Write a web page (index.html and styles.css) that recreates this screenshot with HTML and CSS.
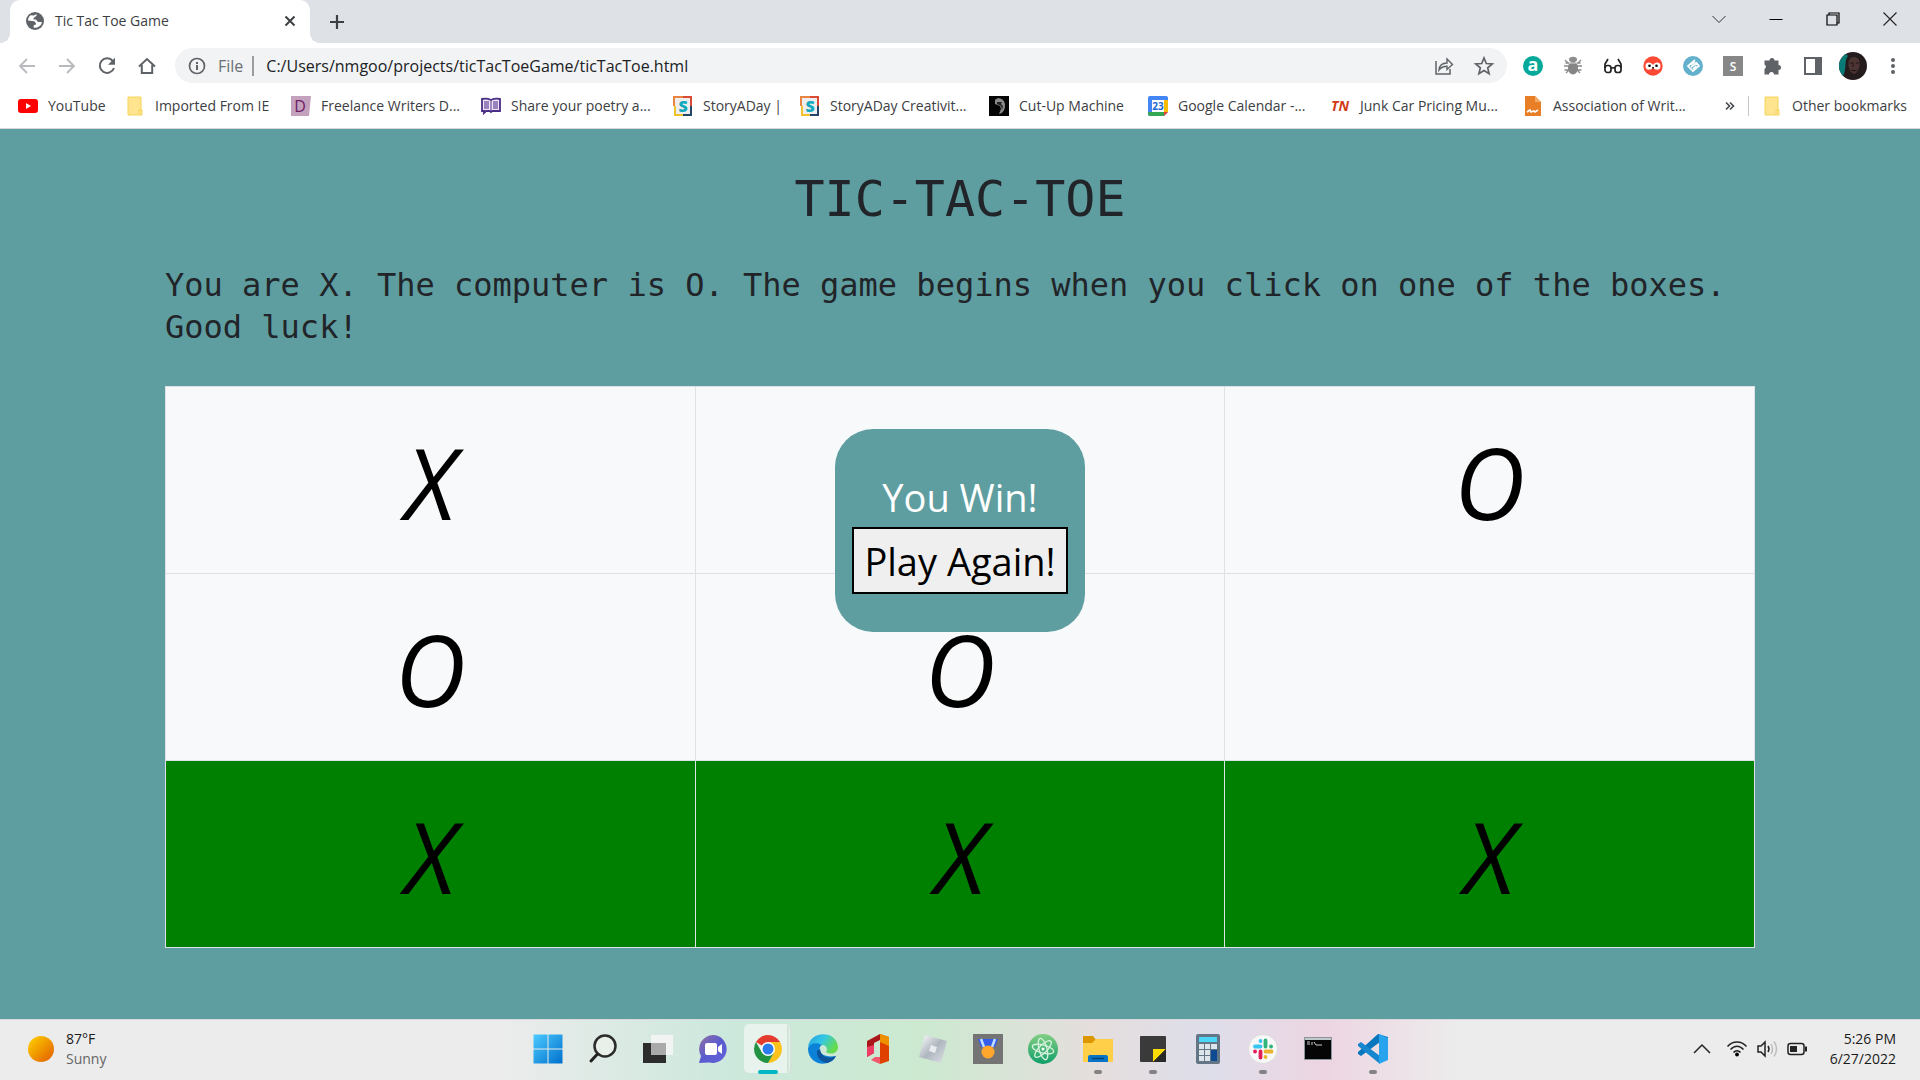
FILE: index.html
```
<!DOCTYPE html>
<html lang="en">
<head>
<meta charset="utf-8">
<title>Tic Tac Toe Game</title>
<link rel="stylesheet" href="styles.css">
</head>
<body>
<header class="browser">
  <div class="tabstrip">
    <div class="tab">
      <svg class="tab-icon" width="18" height="18" viewBox="0 0 18 18"><circle cx="9" cy="9" r="9" fill="#5f6368"/><path d="M2 8.5c0-2 1-4 2.600-5.200L8 3.500l2-1.300c1 .2.800 1.300.2 1.800L8.500 5.300 7 7.200l2.500.3c1.500.2 1.500 2.300 2.800 2.400h3.600c-.3 2-1.300 3.500-2.900 4.700-1.800 1.300-4 1.500-5.400 1l.2-2.600c1.600 0 2.700-1 2.100-1.800L8.300 9.300z" fill="#fff"/></svg>
      <span class="tab-title">Tic Tac Toe Game</span>
      <button class="icon-button" aria-label="Close tab"><svg width="12" height="12" viewBox="0 0 12 12"><path d="M1.500 1.500l9 9m0-9l-9 9" stroke="#3c4043" stroke-width="2"/></svg></button>
    </div>
    <button class="icon-button new-tab" aria-label="New tab"><svg width="16" height="16" viewBox="0 0 16 16"><path d="M8 1v14M1 8h14" stroke="#3c4043" stroke-width="2.200"/></svg></button>
    <div class="window-controls">
      <button class="icon-button" aria-label="Search tabs"><svg width="14" height="14" viewBox="0 0 14 14"><path d="M.5 4L7 10.500 13.500 4" fill="none" stroke="#333"/></svg></button>
      <button class="icon-button" aria-label="Minimize"><svg width="14" height="14" viewBox="0 0 14 14"><path d="M.5 7.500h13" stroke="#000"/></svg></button>
      <button class="icon-button" aria-label="Restore"><svg width="14" height="14" viewBox="0 0 14 14"><path d="M1 3h10v10H1zM3 3V1h10v10h-2" fill="none" stroke="#000" stroke-width="1.200"/></svg></button>
      <button class="icon-button" aria-label="Close window"><svg width="14" height="14" viewBox="0 0 14 14"><path d="M.5.5l13 13m0-13l-13 13" stroke="#222" stroke-width="1.100"/></svg></button>
    </div>
  </div>

  <div class="toolbar">
    <div class="nav-buttons">
      <button class="icon-button" aria-label="Back"><svg width="18" height="18" viewBox="0 0 18 18"><path d="M17 9H2m7-7L2 9l7 7" fill="none" stroke="#b8babd" stroke-width="1.800"/></svg></button>
      <button class="icon-button" aria-label="Forward"><svg width="18" height="18" viewBox="0 0 18 18"><path d="M1 9h15M9 2l7 7-7 7" fill="none" stroke="#b8babd" stroke-width="1.800"/></svg></button>
      <button class="icon-button" aria-label="Reload"><svg width="18" height="18" viewBox="0 0 18 18"><path d="M14.800 4A7.300 7.300 0 1 0 16 11" fill="none" stroke="#5f6368" stroke-width="2"/><path d="M17 .8v7h-7z" fill="#5f6368"/></svg></button>
      <button class="icon-button" aria-label="Home"><svg width="18" height="18" viewBox="0 0 18 18"><path d="M1 9.500L9 2l8 7.500M3.800 8v8h10.400V8" fill="none" stroke="#5f6368" stroke-width="2"/></svg></button>
    </div>
    <div class="omnibox">
      <svg width="18" height="18" viewBox="0 0 18 18"><circle cx="9" cy="9" r="7.500" fill="none" stroke="#5f6368" stroke-width="1.700"/><path d="M9 8v5M9 5v2" stroke="#5f6368" stroke-width="2"/></svg>
      <label class="scheme" for="address">File</label>
      <input class="address" id="address" type="text" value="C:/Users/nmgoo/projects/ticTacToeGame/ticTacToe.html">
      <button class="icon-button" aria-label="Share"><svg width="20" height="20" viewBox="0 0 20 20"><path d="M2 5v13h14v-5" fill="none" stroke="#5f6368" stroke-width="1.500"/><path d="M5 14c.5-5 3-7 8-7V3l5.500 5.500L13 13.500v-3.300c-3.500 0-6 1-8 3.800z" fill="none" stroke="#5f6368" stroke-width="1.400"/></svg></button>
      <button class="icon-button" aria-label="Bookmark this page"><svg width="20" height="20" viewBox="0 0 20 20"><path d="M10 2l2.300 5.500 6 .5-4.600 3.900 1.400 5.800L10 14.600l-5.100 3.100 1.400-5.800L1.700 8l6-.5z" fill="none" stroke="#5f6368" stroke-width="1.700"/></svg></button>
    </div>
    <div class="extensions">
      <button class="icon-button" aria-label="Shopping assistant"><svg width="20" height="20" viewBox="0 0 20 20"><circle cx="10" cy="10" r="10" fill="#05a99a"/><text x="10" y="15" class="glyph glyph-a">a</text></svg></button>
      <button class="icon-button" aria-label="Bug extension"><svg width="20" height="20" viewBox="0 0 20 20"><path d="M2 4l4 4m12-4l-4 4M1 10h5m8 0h5M3 17l4-4m10 4l-4-4M2.500 7h4M13.500 7h4M1.500 14h5m7 0h5" stroke="#8b8b8b" stroke-width="1.300"/><ellipse cx="10" cy="3.500" rx="4" ry="2.700" fill="#8e8e8e"/><ellipse cx="10" cy="12" rx="5" ry="6.500" fill="#858585"/><path d="M5.500 7h9" stroke="#ddd"/></svg></button>
      <button class="icon-button" aria-label="Reader extension"><svg width="20" height="20" viewBox="0 0 20 20"><g fill="none" stroke="#222" stroke-width="1.700"><rect x="2" y="9.500" width="6" height="7" rx="2.500"/><rect x="12" y="9.500" width="6" height="7" rx="2.500"/><path d="M2 12V8l3-5M18 12V8l-3-5M8 12.500c1-1 3-1 4 0"/></g></svg></button>
      <button class="icon-button" aria-label="Owl extension"><svg width="20" height="20" viewBox="0 0 20 20"><circle cx="10" cy="10" r="9.700" fill="#fb4934"/><path d="M2.500 10c0-4.500 5.500-4.500 7.500-1 2-3.500 7.500-3.500 7.500 1 0 5-5.500 4.500-7.500 1.500-2 3-7.500 3.500-7.500-1.500z" fill="#fff"/><circle cx="6.500" cy="9.800" r="1.300"/><circle cx="13.500" cy="9.800" r="1.300"/><path d="M9 11l1 2.500 1-2.500z"/></svg></button>
      <button class="icon-button" aria-label="Link extension"><svg width="20" height="20" viewBox="0 0 20 20"><circle cx="10" cy="10" r="10" fill="#62b0cc"/><path d="M12 4L5 10l5 5 6-5-2.500-3L8 11m0-2.500l4-3M10 13l3.500-3" fill="none" stroke="#fff" stroke-width="1.700"/></svg></button>
      <button class="icon-button" aria-label="S extension"><svg width="20" height="20" viewBox="0 0 20 20"><path d="M0 0h20v20H0z" fill="#878787"/><text x="10" y="14.500" class="glyph glyph-s">S</text></svg></button>
      <button class="icon-button" aria-label="Extensions"><svg width="20" height="20" viewBox="0 0 20 20"><path d="M1.500 4.500h5a2.500 2.500 0 1 1 5 0h4V9a2.500 2.500 0 1 1 0 5v4.500H11a2.500 2.500 0 0 0-5 0H1.500V13a2.500 2.500 0 0 0 0-4.500z" fill="#5f6368"/></svg></button>
      <button class="icon-button" aria-label="Side panel"><svg width="20" height="20" viewBox="0 0 20 20"><path d="M2 2h16v16H2z" fill="none" stroke="#5f6368" stroke-width="2"/><path d="M12 2h6v16h-6z" fill="#5f6368"/></svg></button>
      <button class="icon-button" aria-label="Profile"><svg width="28" height="28" viewBox="0 0 28 28"><circle cx="14" cy="14" r="14" fill="#241b1c"/><path d="M7 2A14 14 0 0 0 4 24C8 17 5 8 9 4z" fill="#087b76"/><path d="M10 8c2-4 8-4 10 0 2 6-1 13-5 14-4-1-7-8-5-14z" fill="#4b3431"/><path d="M11 11h3m3 0h3m-6 0v4m-2 3c2 1 4 1 6 0" stroke="#211516"/></svg></button>
      <button class="icon-button" aria-label="Menu"><svg width="20" height="20" viewBox="0 0 20 20" fill="#5f6368"><circle cx="10" cy="4" r="2"/><circle cx="10" cy="10" r="2"/><circle cx="10" cy="16" r="2"/></svg></button>
    </div>
  </div>

  <nav class="bookmarks" aria-label="Bookmarks">
    <div class="bookmark-list">
      <a class="bookmark" href="#"><svg width="20" height="20" viewBox="0 0 20 20"><rect y="3" width="20" height="14" rx="3" fill="red"/><path d="M8 7l5 3-5 3z" fill="#fff"/></svg>YouTube</a>
      <a class="bookmark" href="#"><svg width="20" height="20" viewBox="0 0 20 20"><path d="M3 1h13v13h1v5H3z" fill="#ffe48f" stroke="#f6d25b"/><path d="M14 18v-4h3" fill="none" stroke="#f6d25b"/></svg>Imported From IE</a>
      <a class="bookmark" href="#"><svg width="20" height="20" viewBox="0 0 20 20"><path d="M0 0h20l-2 20H0z" fill="#c4a2bd"/><text x="9" y="16" class="glyph glyph-d">D</text></svg>Freelance Writers D...</a>
      <a class="bookmark" href="#"><svg width="20" height="20" viewBox="0 0 20 20"><path d="M1 3q5-1 9 1 4-2 9-1v12h-8l-1 1-1-1H5l-2 2v-2H1z" fill="#ede8f6" stroke="#4b2c86" stroke-width="1.800"/><path d="M10 4v11M3 6h5M3 8h5M3 10h5M3 12h5M12 6h5M12 8h5M12 10h5M12 12h5" stroke="#8060ad" stroke-width="1.400"/></svg>Share your poetry a...</a>
      <a class="bookmark" href="#"><svg width="20" height="20" viewBox="0 0 20 20"><path d="M1 0h18v20H1z" fill="#eee"/><path d="M1 10V1h9" fill="none" stroke="#e98540" stroke-width="2"/><path d="M10 1h8v9" fill="none" stroke="#d94b35" stroke-width="2"/><path d="M18 10v9h-8" fill="none" stroke="#244568" stroke-width="2"/><path d="M10 19H2v-9" fill="none" stroke="#f0c22d" stroke-width="2"/><text x="10" y="16" class="glyph glyph-story">S</text></svg>StoryADay |</a>
      <a class="bookmark" href="#"><svg width="20" height="20" viewBox="0 0 20 20"><path d="M1 0h18v20H1z" fill="#eee"/><path d="M1 10V1h9" fill="none" stroke="#e98540" stroke-width="2"/><path d="M10 1h8v9" fill="none" stroke="#d94b35" stroke-width="2"/><path d="M18 10v9h-8" fill="none" stroke="#244568" stroke-width="2"/><path d="M10 19H2v-9" fill="none" stroke="#f0c22d" stroke-width="2"/><text x="10" y="16" class="glyph glyph-story">S</text></svg>StoryADay Creativit...</a>
      <a class="bookmark" href="#"><svg width="20" height="20" viewBox="0 0 20 20"><path d="M0 0h20v20H0z" fill="#050505"/><path d="M6 4c3-4 10-1 10 5 0 5-2 8-6 9l2-5-1-3-5-2z" fill="#8a8a8a"/><path d="M8 6l5 0-1 2 2 2-1 4-1-4-4-2z" fill="#222"/></svg>Cut-Up Machine</a>
      <a class="bookmark" href="#"><svg width="20" height="20" viewBox="0 0 20 20"><path d="M0 2q0-2 2-2h16q2 0 2 2v14l-4 4H2q-2 0-2-2z" fill="#4285f4"/><path d="M16 4h4v12h-4z" fill="#fbbc04"/><path d="M0 16h16v4H2q-2 0-2-2z" fill="#34a853"/><path d="M16 16h4l-4 4z" fill="#ea4335"/><path d="M4 4h12v12H4z" fill="#fff"/><text x="10" y="14" class="glyph glyph-date">23</text></svg>Google Calendar -...</a>
      <a class="bookmark" href="#"><svg width="20" height="20" viewBox="0 0 20 20"><text x="10" y="15" class="glyph glyph-tn">TN</text></svg>Junk Car Pricing Mu...</a>
      <a class="bookmark" href="#"><svg width="20" height="20" viewBox="0 0 20 20"><path d="M2 0h10l6 6v14H2z" fill="#e87e26"/><path d="M12 0v6h6z" fill="#f3a967"/><path d="M4 16l3-2 1 2 3-1 1 1 3-2" fill="none" stroke="#fff" stroke-width="1.600"/></svg>Association of Writ...</a>
    </div>
    <button class="icon-button more" aria-label="More bookmarks"><svg width="10" height="10" viewBox="0 0 10 10"><path d="M1 1.500L4.500 5 1 8.500M5 1.500L8.500 5 5 8.500" fill="none" stroke="#44474b" stroke-width="1.600"/></svg></button>
    <a class="bookmark other" href="#"><svg width="20" height="20" viewBox="0 0 20 20"><path d="M3 1h13v13h1v5H3z" fill="#ffe48f" stroke="#f6d25b"/><path d="M14 18v-4h3" fill="none" stroke="#f6d25b"/></svg>Other bookmarks</a>
  </nav>
</header>

<main class="page">
  <h1 class="title">TIC-TAC-TOE</h1>
  <p class="intro">You are X. The computer is O. The game begins when you click on one of the boxes. Good luck!</p>
  <div class="board-area">
    <table class="board">
      <tbody>
        <tr><td>X</td><td></td><td>O</td></tr>
        <tr><td>O</td><td>O</td><td></td></tr>
        <tr class="winner"><td>X</td><td>X</td><td>X</td></tr>
      </tbody>
    </table>
    <div class="result" role="dialog" aria-labelledby="result-text">
      <p class="result-text" id="result-text">You Win!</p>
      <button class="play-again">Play Again!</button>
    </div>
  </div>
</main>

<footer class="taskbar">
  <div class="weather">
    <svg width="26" height="26" viewBox="0 0 26 26"><defs><linearGradient id="sun" x2="1" y2="1"><stop stop-color="#ffd500"/><stop offset="1" stop-color="#e25a00"/></linearGradient></defs><circle cx="13" cy="13" r="13" fill="url(#sun)"/></svg>
    <div><div>87°F</div><div class="condition">Sunny</div></div>
  </div>
  <div class="apps">
    <button class="app" aria-label="Start"><svg width="30" height="30" viewBox="0 0 30 30"><defs><linearGradient id="win" x2="1" y2="1"><stop stop-color="#4ccaff"/><stop offset="1" stop-color="#0070cc"/></linearGradient></defs><path d="M.5.5h14v14H.5zm15 0h14v14h-14zm-15 15h14v14H.5zm15 0h14v14h-14z" fill="url(#win)"/></svg></button>
    <button class="app" aria-label="Search"><svg width="30" height="30" viewBox="0 0 30 30"><circle cx="17" cy="12" r="10.500" fill="#e9efe9" stroke="#2b2b2b" stroke-width="2.500"/><path d="M9.500 20L3 27" stroke="#222" stroke-width="3" stroke-linecap="round"/></svg></button>
    <button class="app" aria-label="Task view"><svg width="30" height="30" viewBox="0 0 30 30"><path d="M0 9h23v20H0z" fill="#2d2d2d"/><path d="M8 1h22v20H8z" fill="#f4f4f4" opacity=".92"/><path d="M8 9h15v12H8z" fill="#aaa"/></svg></button>
    <button class="app" aria-label="Chat"><svg width="30" height="30" viewBox="0 0 30 30"><defs><linearGradient id="chat" x2="1" y2="1"><stop stop-color="#93709f"/><stop offset=".5" stop-color="#5b5bd0"/><stop offset="1" stop-color="#6264d8"/></linearGradient></defs><path d="M15 1a14 14 0 1 1-4 27.500L1 29l2-7A14 14 0 0 1 15 1z" fill="url(#chat)"/><rect x="7" y="9" width="12" height="12" rx="2" fill="#fff"/><path d="M20 13l4-3v10l-4-3z" fill="#fff"/></svg></button>
    <button class="app active" aria-label="Chrome"><svg width="28" height="28" viewBox="0 0 28 28"><path d="M14 14L1.900 7A14 14 0 0 1 26.100 7H14z" fill="#e33b2e"/><path d="M14 7h12.100A14 14 0 0 1 14 28l6-10.500z" fill="#fcc21c"/><path d="M1.900 7A14 14 0 0 0 14 28l6.100-10.500L14 14 8 17.500z" fill="#229342"/><circle cx="14" cy="14" r="7" fill="#fff"/><circle cx="14" cy="14" r="5.500" fill="#2a7cef"/></svg></button>
    <button class="app" aria-label="Edge"><svg width="30" height="30" viewBox="0 0 30 30"><defs><linearGradient id="edge" x2="1" y2=".5"><stop stop-color="#229cdf"/><stop offset=".5" stop-color="#34c7e5"/><stop offset="1" stop-color="#66dc4b"/></linearGradient></defs><path d="M0 13C2-4 29-4 30 13c0 7-8 8-12 5 2-2 1-7-4-7C7 10 2 11 0 13z" fill="url(#edge)"/><path d="M0 14c2-5 9-6 14-3-5 2-3 14 14 11-4 7-12 9-18 7C3 26 0 21 0 14z" fill="#0b82d8"/><path d="M9 17c-1 6 4 11 10 12 4-1 7-3 9-7-6 3-15 2-16-7z" fill="#0c549c"/></svg></button>
    <button class="app" aria-label="Office"><svg width="30" height="30" viewBox="0 0 30 30"><path d="M4 7l13-7v6l-6 3v10l-7 4z" fill="#aa171b"/><path d="M4 13l7-2v8l-7 4z" fill="#ef3c65"/><path d="M17 0l9 3v24l-9 3z" fill="#df4200"/><path d="M17 0l9 3v9l-9-4z" fill="#ee9100"/><path d="M8 26l4-3h5v7z" fill="#f3576c"/></svg></button>
    <button class="app" aria-label="Roblox"><svg width="30" height="30" viewBox="0 0 30 30"><defs><linearGradient id="rob" x2="1" y2="1"><stop stop-color="#fff"/><stop offset=".5" stop-color="#aeb6bf"/><stop offset="1" stop-color="#e1e4e8"/></linearGradient></defs><path d="M7 1l22 6-6 22-22-6z" fill="url(#rob)"/><path d="M13 11l6 2-2 6-6-2z" fill="#e8ecee"/></svg></button>
    <button class="app" aria-label="Medal"><svg width="30" height="30" viewBox="0 0 30 30"><path d="M0 0h30v30H0z" fill="#747474"/><path d="M5 5h20l-3 8H8z" fill="#345ced"/><path d="M8 5l3 8M22 5l-3 8" stroke="#c2dfff" stroke-width="2.500"/><circle cx="15" cy="18" r="6.500" fill="#ffa62c"/></svg></button>
    <button class="app" aria-label="Atom"><svg width="30" height="30" viewBox="0 0 30 30"><defs><linearGradient id="atom" x2="0" y2="1"><stop stop-color="#83cf83"/><stop offset="1" stop-color="#109e6a"/></linearGradient></defs><circle cx="15" cy="15" r="15" fill="url(#atom)"/><g fill="none" stroke="#d9f1df" stroke-width="1.300"><ellipse cx="15" cy="15" rx="11" ry="4" transform="rotate(15 15 15)"/><ellipse cx="15" cy="15" rx="11" ry="4" transform="rotate(75 15 15)"/><ellipse cx="15" cy="15" rx="11" ry="4" transform="rotate(135 15 15)"/></g><circle cx="15" cy="15" r="1.500" fill="#fff"/></svg></button>
    <button class="app running" aria-label="File Explorer"><svg width="30" height="30" viewBox="0 0 30 30"><path d="M0 2h10l3 4v6H0z" fill="#dc9600"/><path d="M13 5h17v23H0V9h9z" fill="#ffcf49"/><path d="M5 28v-5q0-2 2-2h16q2 0 2 2v5z" fill="#0874c8"/><path d="M9 24.500h12" stroke="#034477" stroke-width="1.500"/></svg></button>
    <button class="app running" aria-label="Sticky Notes"><svg width="30" height="30" viewBox="0 0 30 30"><rect x="2" y="2" width="26" height="26" rx="1" fill="#3a3a3a"/><path d="M15 15h13L15 28z" fill="#ffdc00"/><path d="M28 15v13H15z" fill="#292929"/></svg></button>
    <button class="app" aria-label="Calculator"><svg width="30" height="30" viewBox="0 0 30 30"><rect x="3" width="24" height="30" rx="2" fill="#647685"/><path d="M6 3h18v5H6z" fill="#4bd8f8"/><path d="M6 10h5v5H6zm6 0h5v5h-5zm6 0h6v5h-6zM6 16h5v5H6zm6 0h5v5h-5zM6 22h5v5H6zm6 0h5v5h-5z" fill="#dce5eb"/><path d="M18 16h6v11h-6z" fill="#0c4a92"/></svg></button>
    <button class="app running" aria-label="Slack"><svg width="30" height="30" viewBox="0 0 30 30"><circle cx="15" cy="15" r="14.500" fill="#f8f8f8" stroke="#ddd"/><g fill="none" stroke-width="3.800" stroke-linecap="round"><path d="M12.500 7v.1M7 12.500h5.500" stroke="#36c5f0"/><path d="M17.500 6.500v6M23 12.500h.1" stroke="#2eb67d"/><path d="M17.500 17.500h6M17.500 23v.1" stroke="#ecb22e"/><path d="M12.500 17.500v6M7 17.500h.1" stroke="#e01e5a"/></g></svg></button>
    <button class="app" aria-label="Command Prompt"><svg width="30" height="30" viewBox="0 0 30 30"><path d="M1.500 3.500h27v22h-27z" fill="#050505" stroke="#8b9499"/><path d="M2 4h26v2H2z" fill="#c0c8ce"/><path d="M4 8h3m-3 2h3m2-2v3m2-3l2 3h6" stroke="#ccc" fill="none"/></svg></button>
    <button class="app running" aria-label="Visual Studio Code"><svg width="30" height="30" viewBox="0 0 30 30"><path d="M22 8L3 22l-3-2v-2L20 0l10 3v5z" fill="#0876bd"/><path d="M0 10l3-2 19 14v8L0 12z" fill="#1687cf"/><path d="M21 0l9 4v22l-9 4z" fill="#28a3ed"/></svg></button>
  </div>
  <div class="tray">
    <svg class="show-hidden" width="18" height="10" viewBox="0 0 18 10"><path d="M1 9l8-8 8 8" fill="none" stroke="#222" stroke-width="1.500"/></svg>
    <svg width="20" height="18" viewBox="0 0 20 18"><g fill="none" stroke="#222" stroke-width="1.500"><path d="M.5 6.500c5-6 14-6 19 0M3.500 9.500c4-4.500 9-4.500 13 0M6.500 12.500c2-2.500 5-2.500 7 0"/></g><circle cx="10" cy="14.500" r="1.900"/></svg>
    <svg width="20" height="18" viewBox="0 0 20 18"><path d="M1 6h3l4-4v14l-4-4H1zM11 6q2 3 0 6" fill="none" stroke="#222" stroke-width="1.500"/><path d="M14 4q3 5 0 10M17 1.500q5 7.500 0 15" fill="none" stroke="#bbb" stroke-width="1.400"/></svg>
    <svg width="20" height="14" viewBox="0 0 20 14"><rect x="1" y="1.500" width="16" height="11" rx="2.500" fill="none" stroke="#222" stroke-width="1.500"/><path d="M3 4h7v6H3zM18 4.500h2v5h-2z" fill="#222"/></svg>
    <div class="clock"><div>5:26 PM</div><div>6/27/2022</div></div>
  </div>
</footer>
</body>
</html>
```
FILE: styles.css
```
* { box-sizing: border-box; }

body {
  margin: 0;
  min-height: 100vh;
  display: flex;
  flex-direction: column;
  font-family: "Segoe UI", "Open Sans", "Noto Sans", sans-serif;
  font-size: 14px;
  color: #3c4043;
}

svg {
  display: block;
  flex: none;
  overflow: visible;
}

button { font-family: inherit; }

.icon-button {
  display: flex;
  align-items: center;
  justify-content: center;
  padding: 0;
  border: 0;
  background: none;
}

/* Browser frame */
.browser {
  background: #fff;
  border-bottom: 1px solid #d5d8db;
}

.tabstrip {
  display: flex;
  height: 43px;
  padding: 0 2px 0 10px;
  background: #dee1e6;
}

.tab {
  position: relative;
  display: flex;
  align-items: center;
  gap: 11px;
  width: 300px;
  padding: 0 14px 2px 16px;
  border-radius: 10px 10px 0 0;
  background: #fff;
}

.tab::before,
.tab::after {
  content: "";
  position: absolute;
  bottom: 0;
  width: 10px;
  height: 10px;
}

.tab::before {
  left: -10px;
  background: radial-gradient(circle at 0 0, transparent 10px, #fff 10px);
}

.tab::after {
  right: -10px;
  background: radial-gradient(circle at 100% 0, transparent 10px, #fff 10px);
}

.tab-title { flex: 1; }

.new-tab {
  width: 34px;
  margin-left: 10px;
}

.window-controls {
  display: flex;
  height: 37px;
  margin-left: auto;
}

.window-controls .icon-button { width: 57px; }

.toolbar {
  display: flex;
  align-items: center;
  height: 45px;
  padding: 0 7px;
}

.nav-buttons, .extensions {
  display: flex;
  align-items: center;
}

.nav-buttons .icon-button, .extensions .icon-button {
  width: 40px;
  height: 34px;
}

.omnibox {
  flex: 1;
  display: flex;
  align-items: center;
  height: 35px;
  margin: 0 6px 0 8px;
  padding: 0 9px 0 13px;
  gap: 12px;
  border-radius: 18px;
  background: #f1f3f4;
  font-size: 16px;
}

.omnibox .icon-button { width: 28px; }

.scheme {
  padding-right: 9px;
  border-right: 2px solid #9a9da0;
  line-height: 20px;
  color: #6b6f73;
}

.address {
  flex: 1;
  min-width: 0;
  padding: 0;
  border: 0;
  background: none;
  font: inherit;
  color: #202124;
}

.bookmarks {
  display: flex;
  align-items: center;
  height: 40px;
  padding: 0 13px 5px 18px;
}

.bookmark-list {
  flex: 1;
  display: grid;
  grid-template-columns: 107px 166px 190px 192px 127px 189px 159px 182px 193px 1fr;
}

.bookmark {
  display: flex;
  align-items: center;
  gap: 10px;
  color: #3c4043;
  text-decoration: none;
  white-space: nowrap;
}

.more { margin-right: 13px; }

.other {
  padding-left: 13px;
  border-left: 1px solid #c4c7ca;
}

.glyph {
  text-anchor: middle;
  font-family: "Open Sans", sans-serif;
  font-weight: 700;
  fill: #fff;
}

.glyph-a { font-size: 18px; }
.glyph-s { font-size: 12px; font-weight: 600; }
.glyph-d { font-size: 16px; font-weight: 400; fill: #6d2064; }
.glyph-story { font-size: 16px; font-weight: 800; fill: #11a9bb; }
.glyph-date { font-size: 10px; fill: #1967d2; }
.glyph-tn { font-size: 14px; font-style: italic; fill: #d33a16; }

/* Game page */
.page {
  flex: 1;
  padding: 40px 24px 70px;
  background: #5f9ea0;
  color: #212529;
}

.title {
  margin: 0 0 35px;
  font: 400 50px/60px "Comic Sans MS", "DejaVu Sans Mono", sans-serif;
  text-align: center;
}

.intro {
  max-width: 1590px;
  margin: 0 auto 38px;
  font: 32px/42px Consolas, "DejaVu Sans Mono", monospace;
}

.board-area {
  position: relative;
  max-width: 1590px;
  margin: 0 auto;
}

.board {
  width: 100%;
  table-layout: fixed;
  border-collapse: collapse;
  background: #f8f9fa;
}

.board td {
  height: 187px;
  padding: 4px 0 0;
  border: 1px solid #dee2e6;
  color: #000;
  font-size: 98px;
  line-height: 150px;
  font-style: italic;
  text-align: center;
}

.winner { background: green; }

.result {
  position: absolute;
  top: 43px;
  left: 50%;
  transform: translateX(-50%);
  width: 250px;
  padding: 38px 17px;
  border-radius: 38px;
  background: #5f9ea0;
  text-align: center;
}

.result-text {
  margin: 0;
  color: #fff;
  font-size: 38px;
  line-height: 60px;
}

.play-again {
  width: 100%;
  height: 67px;
  padding: 0;
  border: 2px solid #000;
  background: #efefef;
  color: #000;
  font-size: 38px;
  line-height: 60px;
  white-space: nowrap;
}

/* Taskbar */
.taskbar {
  display: grid;
  grid-template-columns: 1fr auto 1fr;
  height: 61px;
  padding-bottom: 3px;
  border-top: 1px solid #d9d9d9;
  background: linear-gradient(90deg, #ececec 26%, #cce8dc 38%, #cce9d0 48%, #e5dedd 57%, #dedeea 63%, #edd5e2 69%, #ececec 76%);
  color: #1b1b1b;
  line-height: 20px;
}

.weather {
  display: flex;
  align-items: center;
  gap: 12px;
  padding-left: 28px;
}

.condition { color: #646464; }

.apps { display: flex; }

.app {
  position: relative;
  display: flex;
  align-items: center;
  justify-content: center;
  width: 55px;
  padding: 0;
  border: 0;
  background: none;
}

.active::before {
  content: "";
  position: absolute;
  inset: 4px 3px 4px 4px;
  border-radius: 5px;
  border-right: 5px double #d2e4da;
  background: #e7f3ec;
}

.active svg { position: relative; }

.active::after,
.running::after {
  content: "";
  position: absolute;
  bottom: 3px;
  width: 8px;
  height: 4px;
  border-radius: 2px;
  background: #828282;
}

.active::after {
  width: 20px;
  background: #00b7c3;
}

.tray {
  display: flex;
  align-items: center;
  justify-content: flex-end;
  gap: 10px;
  padding-right: 24px;
}

.show-hidden { margin-right: 6px; }

.clock {
  margin-left: 13px;
  text-align: right;
}
```
